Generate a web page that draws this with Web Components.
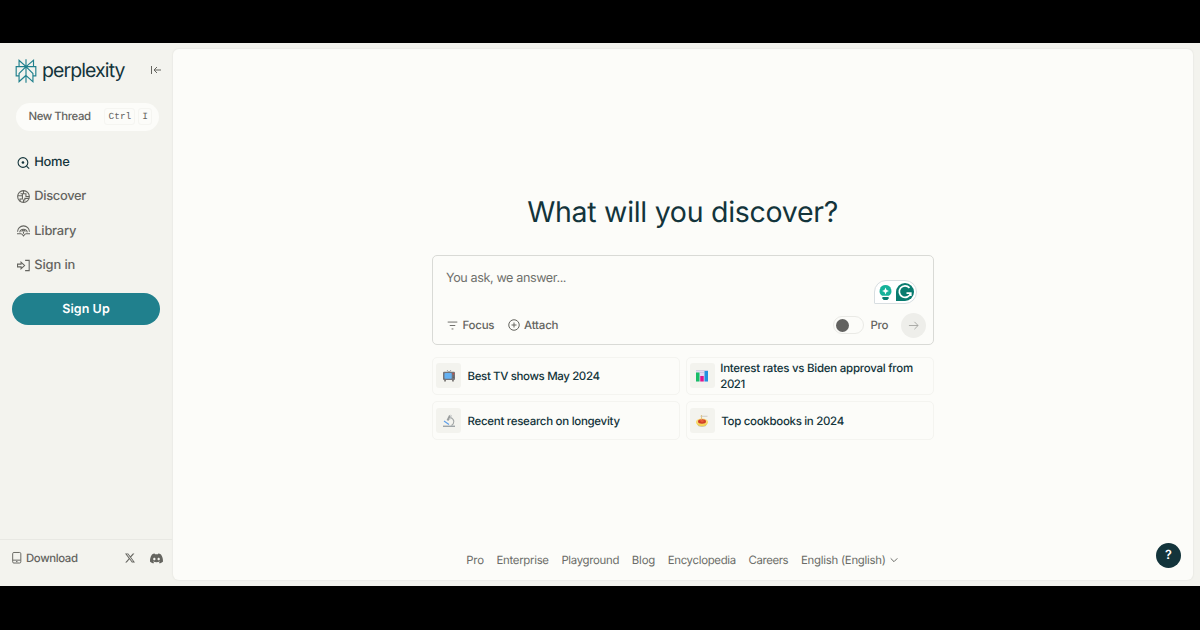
<!DOCTYPE html>
<html lang="en">
<head>
<meta charset="utf-8">
<title>Perplexity</title>
<style>
  html, body {
    margin: 0;
    height: 100%;
    background: #000;
  }

  body {
    font-family: Inter, "Liberation Sans", sans-serif;
    text-rendering: geometricPrecision;
    --offset: #f3f3ee;
    --paper: #fcfcf9;
    --ink: #13343b;
    --quiet: #64645f;
    --line: #e8e8e3;
    --super: #20808d;
  }
</style>
</head>
<body>
<app-shell>
  <side-bar slot="side">
    <nav-item icon="home" width="35.5" active>Home</nav-item>
    <nav-item icon="discover" width="52">Discover</nav-item>
    <nav-item icon="library" width="42">Library</nav-item>
    <nav-item icon="signin" width="41">Sign in</nav-item>
  </side-bar>

  <h1-title><fit-text width="311">What will you discover?</fit-text></h1-title>
  <ask-box></ask-box>
  <suggestion-grid>
    <suggestion-card icon="tv"><fit-text width="132.5">Best TV shows May 2024</fit-text></suggestion-card>
    <suggestion-card icon="chart" tight><fit-text width="193">Interest rates vs Biden approval from</fit-text><br><fit-text width="25">2021</fit-text></suggestion-card>
    <suggestion-card icon="microscope"><fit-text width="152.5">Recent research on longevity</fit-text></suggestion-card>
    <suggestion-card icon="pasta"><fit-text width="123">Top cookbooks in 2024</fit-text></suggestion-card>
  </suggestion-grid>
  <page-footer slot="footer">
    <fit-text width="18">Pro</fit-text>
    <fit-text width="52.5">Enterprise</fit-text>
    <fit-text width="58">Playground</fit-text>
    <fit-text width="23.5">Blog</fit-text>
    <fit-text width="68.5">Encyclopedia</fit-text>
    <fit-text width="40">Careers</fit-text>
    <fit-text width="85">English (English)</fit-text>
  </page-footer>
  <help-button slot="help">?</help-button>
</app-shell>

<script>
const icons = {
  logo: '<path fill="currentColor" d="M22.3977 7.0896h-2.3106V.0676l-7.5094 6.3542V.1577h-1.1554v6.1966L4.4904 0v7.0896H1.6023v10.3976h2.8882V24l6.932-6.3591v6.2005h1.1554v-6.0469l6.9318 6.1807v-6.4879h2.8882V7.0896zm-3.4657-4.531v4.531h-5.355l5.355-4.531zm-13.2862.0676 4.8691 4.4634H5.6458V2.6262zM2.7576 16.332V8.245h7.8476l-6.1149 6.1147v1.9723H2.7576zm2.8882 5.0404v-3.8852h.0001v-2.6488l5.7763-5.7764v7.0111l-5.7764 5.2993zm12.7086.0248-5.7766-5.1509V9.0618l5.7766 5.7766v6.5588zm2.8882-5.0652h-1.733v-1.9723L13.3948 8.245h7.8478v8.087z"/>',
  collapse: '<path d="M3 4v16M22 12H8M14 6l-6 6 6 6"/>',
  home: '<circle cx="11" cy="12" r="9"/><circle cx="11" cy="12" r="2.400" fill="currentColor" stroke="none"/><path d="M17.5 18.5 22.5 23.500"/>',
  discover: '<circle cx="12" cy="12" r="10.800"/><path d="M1.500 10.500H10V7H6.500M10 10.500v6H5.500v4.500M12 1.500V7h4.500v5H22.500M22 15.500h-7.500v3H12V22.500"/>',
  library: '<path d="M1 14.500a11 11 0 0 1 22 0M5 15.500a7.100 7.100 0 0 1 14 0M0 18h7c2.500 0 3.500 2 5 4 1.500-2 2.500-4 5-4h7"/><path d="M9 14.500a3 3 0 0 1 6 0M12 14v4"/>',
  signin: '<path d="M15 2.500h7.500v19H15M1 9.500h6.500V5.800L14 12l-6.500 6.200V14.500H1Z"/>',
  phone: '<rect x="3.500" y="1" width="17" height="22" rx="2.500"/><path d="M4 17h16M10.500 20h3"/>',
  x: '<path fill="currentColor" stroke="none" d="M18.901 1.153h3.68l-8.04 9.19L24 22.846h-7.406l-5.8-7.584-6.638 7.584H.474l8.6-9.83L0 1.154h7.594l5.243 6.932ZM17.61 20.644h2.039L6.486 3.24H4.298Z"/>',
  discord: '<path fill="currentColor" fill-rule="evenodd" stroke="none" d="M20.3 4.4a19.8 19.8 0 0 0-4.9-1.5c-.3.4-.5.9-.7 1.300a18 18 0 0 0-5.500 0c-.2-.4-.4-.9-.7-1.300A19.700 19.700 0 0 0 3.700 4.400C.5 9-.3 13.600.1 18.100c2 1.500 4 2.400 6 3 .5-.6.9-1.300 1.300-2-.7-.3-1.300-.6-1.900-1l.5-.4c3.900 1.800 8.200 1.800 12 0l.5.4c-.6.4-1.200.7-1.900 1 .4.700.8 1.400 1.300 2 2-.6 4-1.500 6-3 .5-5.200-.8-9.700-3.600-13.700ZM8 15.300c-1.200 0-2.200-1.100-2.200-2.400s1-2.400 2.200-2.400 2.200 1.100 2.200 2.400-1 2.400-2.200 2.400Zm8 0c-1.200 0-2.200-1.100-2.200-2.400s1-2.400 2.200-2.400 2.200 1.100 2.200 2.400-1 2.400-2.200 2.400Z"/>',
  focus: '<path d="M1.500 4.500h21M6 12h12M10 19.500h4"/>',
  attach: '<circle cx="12" cy="12" r="10.500"/><path d="M12 7v10M7 12h10"/>',
  arrow: '<path d="M2 12h20M14 4l8 8-8 8"/>',
  chevron: '<path d="M2 7l10 10L22 7"/>',
  tv: '<path stroke="#85898d" stroke-width="1.500" d="M8 0l4 5 4-5"/><path stroke="#6a6664" stroke-width="3" d="M5 18l-1.500 5M19 18l1.500 5"/><rect x="0" y="3.500" width="24" height="16.500" rx="2" fill="#74747a" stroke="none"/><rect x="3" y="6" width="14.500" height="11.500" rx="1.500" fill="#64b1f2" stroke="none"/><rect x="19.300" y="6" width="3" height="3" fill="#c34b43" stroke="none"/><path stroke="#4d4d52" stroke-width="1" d="M19.500 12h3M19.500 15h3"/>',
  chart: '<g stroke="none"><path fill="#e3dcf2" d="M0 1h24v22H0z"/><path fill="#bcb0d2" d="M0 1h24v1H0zM8 4h8v1H8z"/><rect x="0" y="5" width="7" height="18" fill="#18bd67"/><rect x="8.500" y="12" width="7" height="11" fill="#df168b"/><rect x="17" y="2" width="7" height="21" fill="#2191df"/></g>',
  microscope: '<g stroke-linejoin="round"><path stroke="#9b9e9e" stroke-width="4" d="M14 1l-5 10"/><path stroke="#c9cccc" stroke-width="2" d="M15 0l2 1-4 9"/><path stroke="#a4a8a8" stroke-width="2.200" d="M15 5c9 4 8 12 2 16"/><path stroke="#5a9dea" stroke-width="2.200" d="M2 12l10 7"/><path stroke="#92999d" stroke-width="2.500" d="M0 22.500h24"/></g>',
  pasta: '<g stroke="none"><ellipse cx="12" cy="18.500" rx="9" ry="5" fill="#b9b4a9"/><path fill="#f4d354" d="M0 13h24c0 6-5 9.500-12 9.500S0 19 0 13z"/><ellipse cx="12" cy="13" rx="12" ry="6" fill="#f8dc75"/><ellipse cx="12" cy="13" rx="8" ry="4.500" fill="#cf3f26"/><path fill="#e95c38" d="M7 11l5-2 5 3-5 3z"/></g><path stroke="#e8c67c" stroke-width="2.200" d="M11 9V0"/><path stroke="#c4c1bb" stroke-width="1.600" d="M9 2.500h14"/>',
  bulb: '<g stroke="none"><path fill="#15b29a" d="M12 0a9.500 9.500 0 0 0-5.500 17.200h11A9.500 9.500 0 0 0 12 0z"/><path fill="#077d70" d="M7 19h10v2l-2 3H9l-2-3z"/><path fill="#fff" d="M12 4l1.700 3.800L17.500 9.500l-3.800 1.700L12 15l-1.700-3.800L6.500 9.500l3.800-1.700z"/></g>',
  grammarly: '<path stroke="none" fill="#087b6f" d="M12 0a12 12 0 0 1 0 24H0V12A12 12 0 0 1 12 0z"/><path stroke="#fff" stroke-width="2.300" d="M18 6.500A7.700 7.700 0 1 0 19.500 13.500H14M19.700 12.400v4.800"/>'
};

// every element renders its own markup into an open root
class BaseElement extends HTMLElement {
  constructor() {
    super();
    this._shadowDOM = this.attachShadow({ mode: 'open' });
  }

  connectedCallback() {
    this.render();
  }
}

class UiIcon extends BaseElement {
  render() {
    const size = this.getAttribute('size') || 12;
    const stroke = this.getAttribute('stroke') || 2;
    const name = this.getAttribute('name');
    this._shadowDOM.innerHTML = `
      <style>
        :host {
          display: block;
          flex: none;
          width: ${size}px;
          height: ${size}px;
        }

        svg {
          display: block;
          width: 100%;
          height: 100%;
          overflow: visible;
        }
      </style>
      <svg viewBox="0 0 24 24" fill="none" stroke="${name === 'logo' ? 'none' : 'currentColor'}" stroke-width="${stroke}">${icons[name]}</svg>
    `;
  }
}

class AppShell extends BaseElement {
  render() {
    this._shadowDOM.innerHTML = `
      <style>
        :host {
          display: flex;
          box-sizing: border-box;
          height: 630px;
          padding: 43px 0 44px;
          overflow: hidden;
        }

        .side {
          flex: none;
          width: 172.500px;
          background: var(--offset);
        }

        .frame {
          display: flex;
          flex: 1;
          padding: 6px 7px 6px 0;
          background: var(--offset);
        }

        main {
          position: relative;
          display: flex;
          flex: 1;
          flex-direction: column;
          align-items: center;
          border-radius: 6px;
          background: var(--paper);
          box-shadow: 0 0 1px 0.500px #ecece7;
        }

        .content {
          flex: 1;
          box-sizing: border-box;
          width: 501.500px;
          padding-top: 143px;
        }

        .help {
          position: absolute;
          right: 12px;
          bottom: 12.500px;
        }
      </style>
      <div class="side"><slot name="side"></slot></div>
      <div class="frame">
        <main>
          <div class="content"><slot></slot></div>
          <slot name="footer"></slot>
          <div class="help"><slot name="help"></slot></div>
        </main>
      </div>
    `;
  }
}

class SideBar extends BaseElement {
  render() {
    this._shadowDOM.innerHTML = `
      <style>
        :host {
          display: flex;
          flex-direction: column;
          height: 100%;
          color: var(--quiet);
        }

        .brand {
          display: flex;
          align-items: center;
          height: 24px;
          padding: 16px 10.500px 0 14px;
          color: var(--super);
        }

        .brand fit-text {
          margin: -2px auto 0 4px;
          color: var(--ink);
          font-size: 19.500px;
          line-height: 24px;
        }

        .brand ui-icon:last-child {
          margin-top: -2px;
          color: var(--quiet);
        }

        .thread {
          display: flex;
          align-items: center;
          gap: 3px;
          box-sizing: border-box;
          height: 28px;
          margin: 19.500px 13.500px 0 16px;
          padding: 0 7px 1px 12.500px;
          border-radius: 14px;
          background: var(--paper);
          font-size: 11.400px;
          font-weight: 500;
        }

        .thread > fit-text {
          margin-right: auto;
        }

        kbd {
          padding: 1px 3px 0;
          border: 1px solid #f5f5f1;
          border-radius: 3px;
          font: 9.500px/14px "Liberation Mono", monospace;
        }

        nav {
          display: flex;
          flex-direction: column;
          gap: 14.400px;
          padding: 21.500px 17px 0;
        }

        .signup {
          display: flex;
          align-items: center;
          justify-content: center;
          height: 31.500px;
          margin: 18.300px 13px 0 12.400px;
          border-radius: 16px;
          background: var(--super);
          color: #fff;
          font-size: 12.500px;
          font-weight: 600;
        }

        footer {
          display: flex;
          align-items: center;
          height: 36px;
          margin-top: auto;
          padding: 0 9.500px 10px 10.500px;
          border-top: 1px solid var(--line);
          font-size: 11.400px;
          font-weight: 500;
        }

        footer fit-text {
          margin: 0 auto 0 4px;
        }

        footer ui-icon:last-child {
          margin-left: 15.500px;
        }
      </style>
      <div class="brand">
        <ui-icon name="logo" size="24"></ui-icon>
        <fit-text width="83.5">perplexity</fit-text>
        <ui-icon name="collapse" size="12" stroke="2"></ui-icon>
      </div>
      <div class="thread">
        <fit-text width="62.5">New Thread</fit-text>
        <kbd>Ctrl</kbd>
        <kbd>I</kbd>
      </div>
      <nav><slot></slot></nav>
      <div class="signup"><fit-text width="47.5">Sign Up</fit-text></div>
      <footer>
        <ui-icon name="phone" size="11.5"></ui-icon>
        <fit-text width="52">Download</fit-text>
        <ui-icon name="x" size="10"></ui-icon>
        <ui-icon name="discord" size="13"></ui-icon>
      </footer>
    `;
  }
}

class NavItem extends BaseElement {
  render() {
    this._shadowDOM.innerHTML = `
      <style>
        :host {
          display: flex;
          align-items: center;
          gap: 4.300px;
          height: 20px;
          font-size: 12.900px;
          font-weight: 450;
        }

        :host([active]) {
          color: var(--ink);
          font-weight: 500;
        }

        fit-text {
          padding-top: 1px;
        }
      </style>
      <ui-icon name="${this.getAttribute('icon')}" size="13" stroke="2"></ui-icon>
      <fit-text width="${this.getAttribute('width')}">${this.textContent}</fit-text>
    `;
  }
}

class H1Title extends BaseElement {
  render() {
    this._shadowDOM.innerHTML = `
      <style>
        :host {
          display: flex;
          justify-content: center;
          height: 40px;
          color: var(--ink);
          font-size: 28.500px;
          line-height: 40px;
        }
      </style>
      <slot></slot>
    `;
  }
}

class AskBox extends BaseElement {
  render() {
    this._shadowDOM.innerHTML = `
      <style>
        :host {
          position: relative;
          display: flex;
          flex-direction: column;
          justify-content: space-between;
          box-sizing: border-box;
          height: 90px;
          margin-top: 23px;
          padding: 13.500px 6.500px 6.500px 13px;
          border: 1.500px solid #d9dad6;
          border-radius: 5px;
          color: var(--quiet);
          font-size: 11.500px;
          font-weight: 500;
        }

        .placeholder {
          color: #6f706c;
          font-size: 12.600px;
          font-weight: 400;
          line-height: 17px;
        }

        .tools {
          display: flex;
          align-items: center;
          height: 25px;
          padding-left: 1px;
        }

        .tools ui-icon {
          margin-right: 4.500px;
        }

        .tools .attach {
          margin-left: 13px;
        }

        .toggle {
          box-sizing: border-box;
          width: 31px;
          height: 18.500px;
          margin: 0 6.500px 0 auto;
          padding: 1.750px;
          border: 1px solid #eaeae6;
          border-radius: 10px;
        }

        .toggle::before {
          content: "";
          display: block;
          width: 13px;
          height: 13px;
          border-radius: 50%;
          background: #626260;
        }

        .submit {
          display: grid;
          place-items: center;
          width: 25px;
          height: 25px;
          margin-left: 12.500px;
          border-radius: 50%;
          background: #eeeeea;
          color: #a4a5a1;
        }

        .submit ui-icon {
          margin: 0;
        }

        /* writing assistant badge floats over the text area */
        .assistant {
          position: absolute;
          top: 24px;
          right: 15.500px;
          display: flex;
          align-items: center;
          gap: 3px;
          box-sizing: border-box;
          width: 43px;
          height: 24px;
          padding: 0 3px;
          border: 1px solid #d8dee1;
          border-radius: 12px 12px 12px 1px;
          background: #fff;
        }
      </style>
      <div class="placeholder"><fit-text width="120.5">You ask, we answer...</fit-text></div>
      <div class="tools">
        <ui-icon name="focus" size="11" stroke="2"></ui-icon>
        <fit-text width="32">Focus</fit-text>
        <ui-icon class="attach" name="attach" size="12" stroke="2"></ui-icon>
        <fit-text width="34.5">Attach</fit-text>
        <div class="toggle"></div>
        <fit-text width="18">Pro</fit-text>
        <div class="submit"><ui-icon name="arrow" size="11" stroke="2"></ui-icon></div>
      </div>
      <div class="assistant">
        <ui-icon name="bulb" size="15"></ui-icon>
        <ui-icon name="grammarly" size="18"></ui-icon>
      </div>
    `;
  }
}

class SuggestionGrid extends BaseElement {
  render() {
    this._shadowDOM.innerHTML = `
      <style>
        :host {
          display: grid;
          grid-template-columns: 1fr 1fr;
          gap: 6px;
          margin-top: 11.500px;
        }
      </style>
      <slot></slot>
    `;
  }
}

class SuggestionCard extends BaseElement {
  render() {
    this._shadowDOM.innerHTML = `
      <style>
        :host {
          display: flex;
          align-items: center;
          gap: 6.500px;
          box-sizing: border-box;
          height: 38.800px;
          padding: 0 3px;
          border: 1px solid #f4f4f0;
          border-radius: 5px;
          color: var(--ink);
          font-size: 11.500px;
          font-weight: 500;
          line-height: 15.500px;
        }

        :host([tight]) {
          gap: 5.500px;
        }

        .tile {
          display: grid;
          flex: none;
          place-items: center;
          width: 25px;
          height: 25px;
          border-radius: 3px;
          background: var(--offset);
        }

        .label {
          padding-top: 1.500px;
        }
      </style>
      <div class="tile"><ui-icon name="${this.getAttribute('icon')}" size="12"></ui-icon></div>
      <div class="label"><slot></slot></div>
    `;
  }
}

class PageFooter extends BaseElement {
  render() {
    this._shadowDOM.innerHTML = `
      <style>
        :host {
          display: flex;
          align-items: center;
          gap: 12.400px;
          height: 40px;
          margin-right: 1px;
          color: #6b6c68;
          font-size: 11.400px;
        }

        ui-icon {
          margin-left: -8px;
        }
      </style>
      <slot></slot>
      <ui-icon name="chevron" size="8" stroke="3"></ui-icon>
    `;
  }
}

class HelpButton extends BaseElement {
  render() {
    this._shadowDOM.innerHTML = `
      <style>
        :host {
          display: grid;
          place-items: center;
          width: 25px;
          height: 25px;
          border-radius: 50%;
          background: var(--ink);
          color: #fff;
          font-size: 12.500px;
          font-weight: 600;
          line-height: 25px;
        }
      </style>
      <slot></slot>
    `;
  }
}

// tracks its text so that the line is as wide as the width attribute
class FitText extends BaseElement {
  render() {
    this._shadowDOM.innerHTML = `
      <style>
        :host {
          display: inline-block;
          white-space: nowrap;
        }
      </style>
      <span><slot></slot></span>
    `;
    const width = Number(this.getAttribute('width'));
    const span = this._shadowDOM.querySelector('span');
    const natural = span.getBoundingClientRect().width;
    const gaps = this.textContent.length - 1;
    span.style.letterSpacing = `${(width - natural) / gaps}px`;
    this.style.width = `${width}px`;
  }
}

customElements.define('app-shell', AppShell);
customElements.define('side-bar', SideBar);
customElements.define('nav-item', NavItem);
customElements.define('h1-title', H1Title);
customElements.define('ask-box', AskBox);
customElements.define('suggestion-grid', SuggestionGrid);
customElements.define('suggestion-card', SuggestionCard);
customElements.define('page-footer', PageFooter);
customElements.define('help-button', HelpButton);
customElements.define('ui-icon', UiIcon);
// last, because it measures text with the styles of all the others in place
customElements.define('fit-text', FitText);
</script>
</body>
</html>
